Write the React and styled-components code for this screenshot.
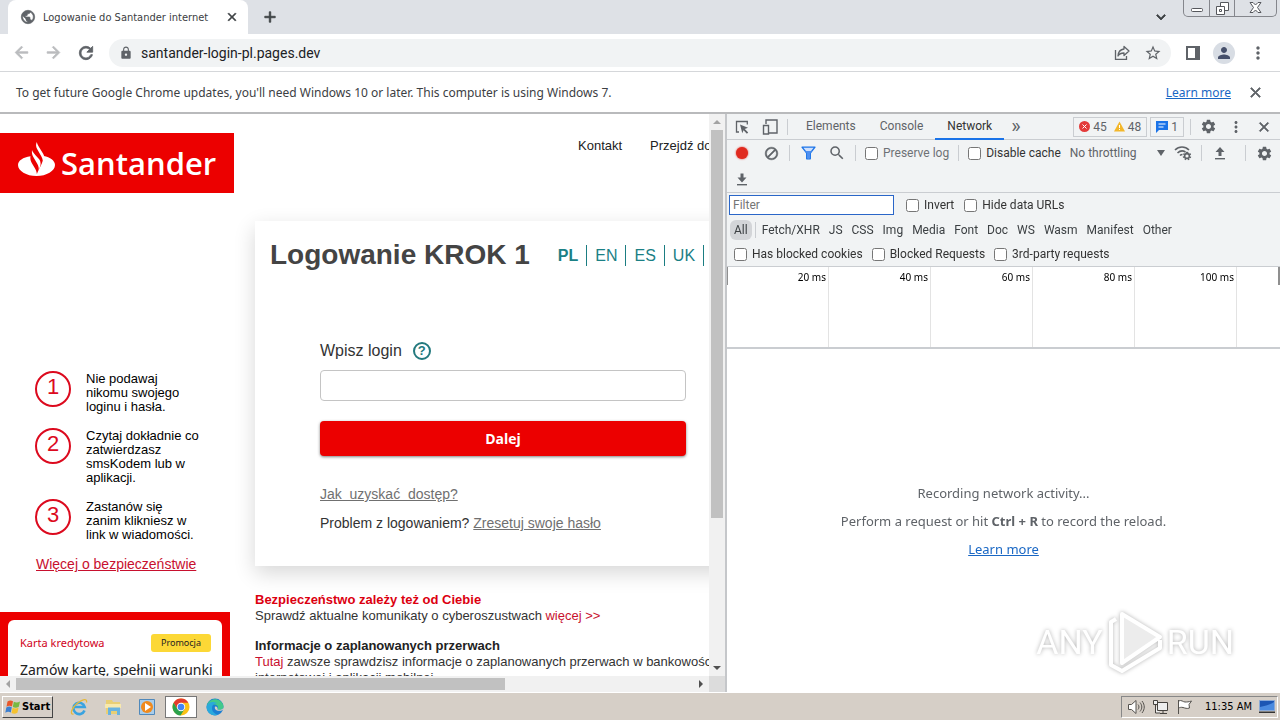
import { useState } from 'react';
import styled, { createGlobalStyle } from 'styled-components';
import {
	MdArrowBack,
	MdArrowForward,
	MdRefresh,
	MdLock,
	MdStarOutline,
	MdClose,
	MdAdd,
	MdMoreVert,
	MdPerson,
	MdPublic,
	MdSettings,
	MdSearch,
	MdBlock,
	MdKeyboardArrowDown
} from 'react-icons/md';

const steps = [
	{ id: 1, text: 'Nie podawaj nikomu swojego loginu i hasła.' },
	{ id: 2, text: 'Czytaj dokładnie co zatwierdzasz smsKodem lub w aplikacji.' },
	{ id: 3, text: 'Zastanów się zanim klikniesz w link w wiadomości.' }
];

const languages = ['PL', 'EN', 'ES', 'UK'];
const resourceTypes = ['Fetch/XHR', 'JS', 'CSS', 'Img', 'Media', 'Font', 'Doc', 'WS', 'Wasm', 'Manifest', 'Other'];
const ticks = ['20 ms', '40 ms', '60 ms', '80 ms', '100 ms'];

const Check = ({ children, muted }) => (
	<CheckLabel $muted={muted}>
		<input type="checkbox" />
		{children}
	</CheckLabel>
);

const ShareIcon = () => (
	<svg width="16" height="16" viewBox="0 0 16 16" fill="none" stroke="#5f6368" strokeWidth="1.3">
		<path d="M1.5 5v9.3h11V11" />
		<path d="M10 1.5 15 6l-5 4.500V8C7 8 5 9 4 11c.2-4 2.500-6.500 6-7z" strokeLinejoin="round" />
	</svg>
);

const SidePanelIcon = () => (
	<svg width="14" height="14" viewBox="0 0 14 14">
		<path fill="#5f6368" fillRule="evenodd" d="M0 0h14v14H0zM2 2h7v10H2z" />
	</svg>
);

const InspectIcon = () => (
	<svg width="14" height="14" viewBox="0 0 14 14">
		<path fill="none" stroke="#5f6368" strokeWidth="1.300" d="M12.300 4.500V1.500H1.500v10.500H4" />
		<path fill="#5f6368" d="m5 4.500 8 3.200-3.200 1.300 3.400 3.400-1.300 1.300-3.400-3.400-1.200 3z" />
	</svg>
);

const DeviceIcon = () => (
	<svg width="16" height="16" viewBox="0 0 16 16" fill="none" stroke="#5f6368" strokeWidth="1.400">
		<path d="M4 5V1h11v13H7" />
		<path d="M1.500 6.500h5V15h-5z" />
	</svg>
);

const FunnelIcon = () => (
	<svg width="15" height="14" viewBox="0 0 15 14">
		<path fill="#cfe0fc" stroke="#1a73e8" strokeWidth="1.300" strokeLinejoin="round" d="M1 1.200h13L9.300 7v5.800H5.700V7z" />
		<path fill="#4e8ff0" d="M4 5h7L9 7.500V12H6V7.500z" />
	</svg>
);

const ArrowBar = ({ up }) => (
	<svg width="12" height="14" viewBox="0 0 12 14">
		<path fill="#5f6368" d={up ? 'M6 1 1.500 6H4.500v4h3V6h3z' : 'M6 10.500 1.500 5.500h3v-4h3v4h3z'} />
		<path fill="#5f6368" d="M1 12h10v1.400H1z" />
	</svg>
);

const WifiGearIcon = () => (
	<svg width="18" height="16" viewBox="0 0 18 16" fill="none" stroke="#5f6368" strokeWidth="1.600">
		<path d="M1 5C5 1 11 1 15 5" />
		<path d="M3.500 8C6 5.600 9 5.400 11.500 7" />
		<path d="M6 10.500c.800-.800 1.500-1 2.500-1" />
		<circle cx="13" cy="11" r="2.400" />
		<path strokeDasharray="1.400 1.500" strokeWidth="1.400" d="M13 7.400a3.600 3.600 0 1 1-.01 0" />
	</svg>
);

const FlameIcon = () => (
	<svg width="37" height="34" viewBox="0 0 37 34" fill="#fff">
		<path d="M12.500 14.300C5 15.300 0 18.800 0 23c0 6 8.300 11 18.500 11S37 29 37 23c0-4.200-4.800-7.600-11.300-8.900.2 2.200-.2 4-1.500 6.500-1.400 3.600-2.900 6-5.300 11.400-.4-2.600-1-4-2-5.700l-3-5.100c-1.300-2.400-1.900-4.600-1.400-6.900z" />
		<path d="M14 8c-.4 3 .2 5 1.600 7.400l3.500 6c1.500 2.500 1.800 4.300 1.600 6.600l1.300-3c1-2.700.8-5-.6-7.500L17.300 13C15.500 10.700 14.500 9.600 14 8z" />
		<path d="M18.800 0c-1.300 2.500-.8 5.200.6 7.500l4 7c1.500 2.800 1.600 4.700 1.200 7 2.300-3.300 2.400-6.500.7-9.500l-4-6.600C20 3.600 19.300 2 18.800 0z" />
	</svg>
);

const WindowsFlag = () => (
	<svg width="16" height="16" viewBox="0 0 16 16">
		<path fill="#e8572a" d="M2.500 2.500C4.500 1.200 6 1.200 8 2.300L7 7.500c-2-1.200-3.500-1-5.500.2z" />
		<path fill="#78b943" d="M8.800 2.700c2 1.100 4 1 6.200-.2l-1.200 5.200c-2 1.200-4 1.200-6 .2z" />
		<path fill="#3c7fd0" d="M1.300 8.500c2-1.200 3.500-1.300 5.500-.2l-1 5.200c-2-1.200-3.500-1-5.500.2z" />
		<path fill="#f5c22f" d="M7.600 8.700c2 1.100 4 1 6-.2l-1.200 5.200c-2 1.200-4 1.200-5.900.2z" />
	</svg>
);

const IeIcon = () => (
	<svg width="18" height="18" viewBox="0 0 18 18" fill="none">
		<path stroke="#39a3e0" strokeWidth="2.600" d="M14.500 12.500A5.700 5.700 0 1 1 14.700 9H5" />
		<path stroke="#e5b93a" strokeWidth="1.300" d="M3.500 16C-.5 17 1.500 10 7 5.500S17.500 0 16.500 4.500" />
	</svg>
);

const FolderIcon = () => (
	<svg width="18" height="18" viewBox="0 0 18 18">
		<path fill="#e9cf74" d="M2 2h6l1 2h7v12H2z" />
		<path fill="#f8e9ac" d="M1 6h16v4H1z" />
		<path fill="#69b3e0" d="M4 9.500h12V17h-3v-4H7v4H4z" />
	</svg>
);

const PlayerIcon = () => (
	<svg width="18" height="18" viewBox="0 0 18 18">
		<path fill="#a9cdea" stroke="#5089bb" d="M1.500 1.500h15v15h-15z" />
		<circle cx="9" cy="9" r="6" fill="#f08a1d" />
		<path fill="#fff" d="m7 5 6 4-6 4z" />
	</svg>
);

const ChromeIcon = () => (
	<svg width="18" height="18" viewBox="0 0 18 18">
		<circle cx="9" cy="9" r="8.500" fill="#fbc116" />
		<path fill="#e33b2e" d="M1.600 4.800A8.500 8.500 0 0 1 16.400 4.800H9L5.400 11z" />
		<path fill="#2ba24c" d="M1.600 4.800A8.500 8.500 0 0 0 8.500 17.500L12.600 11H5.400z" />
		<circle cx="9" cy="9" r="4.200" fill="#fff" />
		<circle cx="9" cy="9" r="3.300" fill="#4285f4" />
	</svg>
);

const EdgeIcon = () => (
	<svg width="18" height="18" viewBox="0 0 18 18">
		<circle cx="9" cy="9" r="8.500" fill="#1b7fd3" />
		<path fill="#42c98b" d="M1 7.500C3-1 15.500-1 17.500 8c.3 3-3 4.500-6 3.500 1.500-3-.5-5-3.500-5-3 0-5.500.5-7 1z" />
		<path fill="#2aa9dc" d="M.7 8.500C2 3.500 8 3 11 5.500 8 5 6 7 6 10c0 4 3 6 6 6.800C6 19 0 14 .7 8.500z" />
		<path fill="#d6cfc7" d="M9 8.500c-1 3 2 5.500 7.500 3.800L18 9.500c-2 2.500-4.500 2.500-6.500 2 .5-2-.5-3.500-2.500-3z" />
	</svg>
);

const TrayIcons = () => (
	<>
		<svg width="18" height="16" viewBox="0 0 18 16" fill="#fff" stroke="#55524e">
			<path d="M1.500 5.500h3L9 1.500v13l-4.500-4h-3z" />
			<path fill="none" d="M11 5.500c1.300 1.500 1.300 3.500 0 5M13 3.500c2.400 3 2.400 6 0 9M15 2c3 4 3 8 0 12" />
		</svg>
		<svg width="17" height="16" viewBox="0 0 17 16" fill="#eee" stroke="#45423e">
			<path d="M5.500 3.500h10v8h-10zM8 14.500h7M11 12v2M1.500 1.500h4v4h-4zM3.500 5.500v8.500H8" />
		</svg>
		<svg width="17" height="16" viewBox="0 0 17 16" fill="#fff" stroke="#55524e">
			<path d="M2.500 15V1M2.500 2c3-1.500 4.500 1 6.500 1s3.500 0 6.500-1L13 5.500l.5 3.500C11 10 9 9 7 8.500s-3 0-4.500.5" />
		</svg>
	</>
);

const BrowserChrome = () => (
	<>
		<TabStrip>
			<Tab>
				<MdPublic size={16} color="#5f6368" strokeWidth={1} />
				<TabTitle>Logowanie do Santander internet</TabTitle>
				<IconButton aria-label="Close tab" $dark><MdClose size={14} strokeWidth={1} /></IconButton>
			</Tab>
			<NewTab aria-label="New tab"><MdAdd size={18} strokeWidth={1} /></NewTab>
			<StripMenu aria-label="Search tabs"><MdKeyboardArrowDown size={18} strokeWidth={1} /></StripMenu>
			<WindowControls>
				<WindowButton aria-label="Minimize">
					<svg width="12" height="12" viewBox="0 0 12 12" fill="#fff" stroke="#55575c"><rect x=".5" y="6.500" width="11" height="3" rx="1" /></svg>
				</WindowButton>
				<WindowButton aria-label="Restore">
					<svg width="13" height="13" viewBox="0 0 13 13" fill="#fff" stroke="#55575c">
						<path fillRule="evenodd" d="M4.500.5h8v8h-8z" />
						<path d="M.5 4.500h8v8h-8zM3.500 7.500h2v2h-2z" />
					</svg>
				</WindowButton>
				<WindowButton $wide aria-label="Close">
					<svg width="13" height="12" viewBox="0 0 13 12" fill="#fff" stroke="#55575c">
						<path d="M1 .5h3L6.500 3 9 .5h3L8.500 5.500 12 10.500H9L6.500 8 4 10.500H1L4.500 5.500z" />
					</svg>
				</WindowButton>
			</WindowControls>
		</TabStrip>
		<Toolbar>
			<IconButton aria-label="Back" $faded><MdArrowBack size={19} strokeWidth={1} /></IconButton>
			<IconButton aria-label="Forward" $faded><MdArrowForward size={19} strokeWidth={1} /></IconButton>
			<IconButton aria-label="Reload"><MdRefresh size={20} strokeWidth={1} /></IconButton>
			<AddressBar>
				<MdLock size={14} color="#5f6368" />
				<Address type="text" aria-label="Address" defaultValue="santander-login-pl.pages.dev" />
				<IconButton aria-label="Share"><ShareIcon /></IconButton>
				<IconButton aria-label="Bookmark"><MdStarOutline size={18} /></IconButton>
			</AddressBar>
			<IconButton aria-label="Side panel"><SidePanelIcon /></IconButton>
			<Avatar aria-label="Profile"><MdPerson size={18} /></Avatar>
			<IconButton aria-label="Menu"><MdMoreVert size={20} /></IconButton>
		</Toolbar>
		<InfoBar>
			<InfoText>
				To get future Google Chrome updates, you'll need Windows 10 or later. This computer is using Windows 7.
			</InfoText>
			<BlueLink href="#">Learn more</BlueLink>
			<IconButton aria-label="Dismiss"><MdClose size={17} strokeWidth={1} /></IconButton>
		</InfoBar>
	</>
);

const LoginPage = () => {
	const [login, setLogin] = useState('');

	return (
		<Page>
			<Sidebar>
				<Logo><FlameIcon /><span>Santander</span></Logo>
				<Steps>
					{steps.map(step => (
						<Step key={step.id}>
							<StepNumber>{step.id}</StepNumber>
							<StepText>{step.text}</StepText>
						</Step>
					))}
				</Steps>
				<SafetyLink href="#">Więcej o bezpieczeństwie</SafetyLink>
				<Promo>
					<PromoCard>
						<PromoTop>Karta kredytowa <Badge>Promocja</Badge></PromoTop>
						<PromoTitle>Zamów kartę, spełnij warunki</PromoTitle>
					</PromoCard>
				</Promo>
			</Sidebar>
			<Main>
				<TopNav>
					<a href="#">Kontakt</a>
					<a href="#">Przejdź do</a>
				</TopNav>
				<LoginCard>
					<CardHead>
						<h1>Logowanie KROK 1</h1>
						<Languages>
							{languages.map((lang, i) => <Lang key={lang} href="#" $active={i === 0}>{lang}</Lang>)}
						</Languages>
					</CardHead>
					<LoginForm onSubmit={e => e.preventDefault()}>
						<LabelRow>
							<label htmlFor="login">Wpisz login</label>
							<Help type="button">?</Help>
						</LabelRow>
						<LoginInput id="login" type="text" value={login} onChange={e => setLogin(e.target.value)} />
						<Submit type="button">Dalej</Submit>
						<GreyLink href="#">Jak&nbsp; uzyskać&nbsp; dostęp?</GreyLink>
						<p>Problem z logowaniem? <GreyLink href="#">Zresetuj swoje hasło</GreyLink></p>
					</LoginForm>
				</LoginCard>
				<Notice>
					<NoticeTitle $red>Bezpieczeństwo zależy też od Ciebie</NoticeTitle>
					<p>Sprawdź aktualne komunikaty o cyberoszustwach <a href="#">więcej &gt;&gt;</a></p>
				</Notice>
				<Notice>
					<NoticeTitle>Informacje o zaplanowanych przerwach</NoticeTitle>
					<p><a href="#">Tutaj</a> zawsze sprawdzisz informacje o zaplanowanych przerwach w bankowości internetowej i aplikacji mobilnej.</p>
				</Notice>
			</Main>
		</Page>
	);
};

const DevTools = () => (
	<Panel>
		<PanelTabs>
			<ToolButton aria-label="Inspect"><InspectIcon /></ToolButton>
			<ToolButton aria-label="Device"><DeviceIcon /></ToolButton>
			<Divider />
			<Tabs>
				<PanelTab>Elements</PanelTab>
				<PanelTab>Console</PanelTab>
				<PanelTab $active>Network</PanelTab>
				<PanelTab $more>»</PanelTab>
			</Tabs>
			<Counters>
				<Counter>
					<svg width="11" height="11" viewBox="0 0 11 11"><circle cx="5.500" cy="5.500" r="5.500" fill="#e33b3b" /><path stroke="#fff" d="m3.500 3.500 4 4m0-4-4 4" /></svg>
					45
					<CounterGap />
					<svg width="11" height="11" viewBox="0 0 11 11"><path fill="#f3b72b" d="M5.500.5 11 10.500H0z" /><path stroke="#fff" d="M5.500 4v3m0 1v1" /></svg>
					48
				</Counter>
				<Counter>
					<svg width="12" height="12" viewBox="0 0 12 12"><path fill="#1a73e8" d="M0 0h12v9H3l-3 3z" /><path stroke="#fff" d="M2.500 3h7m-7 3h5" /></svg>
					1
				</Counter>
			</Counters>
			<Divider />
			<ToolButton aria-label="Settings"><MdSettings size={17} /></ToolButton>
			<ToolButton aria-label="More"><MdMoreVert size={18} /></ToolButton>
			<ToolButton aria-label="Close panel"><MdClose size={16} strokeWidth={1} /></ToolButton>
		</PanelTabs>
		<NetworkBar>
			<BarRow>
				<ToolButton aria-label="Record"><RecordDot /></ToolButton>
				<ToolButton aria-label="Clear"><MdBlock size={15} strokeWidth={1} /></ToolButton>
				<Divider />
				<ToolButton aria-label="Filter"><FunnelIcon /></ToolButton>
				<ToolButton aria-label="Search"><MdSearch size={18} /></ToolButton>
				<Divider />
				<Check muted>Preserve log</Check>
				<Divider />
				<Check>Disable cache</Check>
				<Throttle>
					<select aria-label="Throttling"><option>No throttling</option></select>
				</Throttle>
				<ToolButton aria-label="Network conditions"><WifiGearIcon /></ToolButton>
				<Divider />
				<ToolButton aria-label="Import"><ArrowBar up /></ToolButton>
				<PushRight />
				<Divider />
				<ToolButton aria-label="Network settings"><MdSettings size={17} /></ToolButton>
			</BarRow>
			<BarRow>
				<ToolButton aria-label="Export"><ArrowBar /></ToolButton>
			</BarRow>
		</NetworkBar>
		<Filters>
			<FilterRow>
				<FilterInput type="text" placeholder="Filter" aria-label="Filter" autoFocus />
				<Check>Invert</Check>
				<Check>Hide data URLs</Check>
			</FilterRow>
			<TypeRow>
				<TypeButton $active>All</TypeButton>
				<Divider />
				{resourceTypes.map(type => <TypeButton key={type}>{type}</TypeButton>)}
			</TypeRow>
			<FilterRow $wide>
				<Check>Has blocked cookies</Check>
				<Check>Blocked Requests</Check>
				<Check>3rd-party requests</Check>
			</FilterRow>
		</Filters>
		<Timeline>
			{ticks.map(tick => <Tick key={tick}>{tick}</Tick>)}
		</Timeline>
		<Recording>
			<span>Recording network activity...</span>
			<span>Perform a request or hit <b>Ctrl + R</b> to record the reload.</span>
			<BlueLink href="#">Learn more</BlueLink>
		</Recording>
		<Watermark>
			<span>ANY</span>
			<svg width="56" height="64" viewBox="0 0 56 64" fill="none" stroke="#fff" strokeWidth="4" strokeLinejoin="round">
				<path fill="#ececec" d="M15 53V4l38 23z" />
				<path d="M9 9 4 12v43l11 6 38-23v-8" />
			</svg>
			<span>RUN</span>
		</Watermark>
	</Panel>
);

const App = () => (
	<Screen>
		<GlobalStyle />
		<BrowserChrome />
		<Workspace>
			<Viewport>
				<LoginPage />
				<ScrollTrack $vertical>
					<Arrow $dir="up" />
					<Thumb $vertical />
					<Arrow $dir="down" />
				</ScrollTrack>
				<ScrollTrack>
					<Arrow $dir="left" />
					<Thumb />
					<Arrow $dir="right" />
				</ScrollTrack>
				<Corner />
			</Viewport>
			<DevTools />
		</Workspace>
		<Taskbar>
			<Start><WindowsFlag />Start</Start>
			<TaskButton aria-label="Internet Explorer"><IeIcon /></TaskButton>
			<TaskButton aria-label="Explorer"><FolderIcon /></TaskButton>
			<TaskButton aria-label="Media Player"><PlayerIcon /></TaskButton>
			<TaskButton aria-label="Chrome" $active><ChromeIcon /></TaskButton>
			<TaskButton aria-label="Edge"><EdgeIcon /></TaskButton>
			<Tray>
				<TrayIcons />
				<time>11:35 AM</time>
				<svg width="16" height="14" viewBox="0 0 16 14">
					<path fill="#1c56b4" stroke="#8aa9d6" d="M.5.5h15v10H.5z" />
					<path fill="#4b8be0" d="M1 7c5-1 10-2 14-5v8H1z" />
					<path fill="#333" d="M0 11.500h16V13H0z" />
				</svg>
			</Tray>
		</Taskbar>
	</Screen>
);

const tahoma = '"DejaVu Sans Condensed", "Noto Sans", sans-serif';
const arial = '"Liberation Sans", Arial, sans-serif';
const segoe = '"Noto Sans", "Open Sans", sans-serif';

const GlobalStyle = createGlobalStyle`
	* {
		box-sizing: border-box;
	}
	body {
		margin: 0;
		background: #fff;
	}
	button, input, select {
		font: inherit;
		color: inherit;
	}
	/* md icons carry an empty bounding path */
	svg[stroke-width="1"] path[fill="none"] {
		stroke: none;
	}
	p, h1, h2, ol {
		margin: 0;
		padding: 0;
	}
`;

const Screen = styled.div`
	display: flex;
	flex-direction: column;
	height: 100vh;
	overflow: hidden;
	font-family: ${tahoma};
	color: #3c4043;
`;

const IconButton = styled.button`
	display: flex;
	align-items: center;
	justify-content: center;
	flex: none;
	padding: 0;
	border: none;
	background: none;
	color: ${props => props.$faded ? '#babcbe' : props.$dark ? '#3c4043' : '#5f6368'};
`;

const ToolButton = styled(IconButton)`
	width: 22px;
	height: 22px;
`;

const BlueLink = styled.a`
	color: #1967c4;
`;

const TabStrip = styled.div`
	display: flex;
	align-items: flex-start;
	flex: none;
	height: 34px;
	padding-left: 8px;
	background: #dee1e6;
`;

const Tab = styled.div`
	display: flex;
	align-items: center;
	gap: 7px;
	width: 240px;
	height: 34px;
	padding: 0 9px 0 12px;
	border-radius: 8px 8px 0 0;
	background: #fff;
	font-size: 11px;
`;

const TabTitle = styled.span`
	flex: 1;
	white-space: nowrap;
`;

const NewTab = styled(IconButton)`
	width: 28px;
	height: 34px;
	margin: 0 auto 0 8px;
	color: #3c4043;
`;

const StripMenu = styled(NewTab)`
	margin: 0 8px 0 0;
`;

const WindowControls = styled.div`
	display: flex;
	height: 17px;
	margin-right: 3px;
	border: 1px solid #84868c;
	border-top: none;
	border-radius: 0 0 5px 5px;
`;

const WindowButton = styled(IconButton)`
	width: ${props => props.$wide ? '42px' : '25px'};
	& + & {
		border-left: 1px solid #84868c;
	}
`;

const Toolbar = styled.div`
	display: flex;
	align-items: center;
	flex: none;
	gap: 13px;
	height: 38px;
	padding: 0 12px;
	border-bottom: 1px solid #d5d7da;
	background: #fff;
`;

const AddressBar = styled.div`
	display: flex;
	align-items: center;
	flex: 1;
	gap: 14px;
	height: 28px;
	margin-right: 2px;
	padding: 0 9px 0 10px;
	border-radius: 14px;
	background: #f1f3f4;
	font: 14px Roboto, sans-serif;
`;

const Address = styled.input`
	flex: 1;
	min-width: 0;
	margin-left: -6px;
	padding: 0;
	border: none;
	background: none;
	color: #202124;
`;

const Avatar = styled(IconButton)`
	width: 22px;
	height: 22px;
	border-radius: 50%;
	background: #d8dde4;
	color: #46506b;
`;

const InfoBar = styled.div`
	display: flex;
	align-items: center;
	flex: none;
	gap: 16px;
	height: 42px;
	padding: 0 16px;
	border-bottom: 2px solid #b9babc;
	background: #fff;
	font: 12px ${segoe};
`;

const InfoText = styled.span`
	flex: 1;
`;

const Workspace = styled.div`
	display: flex;
	flex: 1;
	min-height: 0;
`;

const Viewport = styled.div`
	display: grid;
	flex: 1;
	min-width: 0;
	grid-template: minmax(0, 1fr) 16px / minmax(0, 1fr) 16px;
`;

const Page = styled.div`
	display: flex;
	min-height: 0;
	padding-top: 19px;
	overflow: hidden;
	background: #fff;
	font-family: ${arial};
	color: #333;
`;

const ScrollTrack = styled.div`
	display: flex;
	flex-direction: ${props => props.$vertical ? 'column' : 'row'};
	align-items: center;
	background: #f1f1f1;
`;

const Thumb = styled.div`
	${props => props.$vertical ? 'width: 12px; height: 69%; margin-bottom: auto;' : 'height: 12px; width: 69%; margin-right: auto;'}
	background: #c1c1c1;
`;

const turns = { up: 0, right: 90, down: 180, left: 270 };

const Arrow = styled.span`
	width: 16px;
	height: 16px;
	flex: none;
	&::before {
		content: '';
		display: block;
		margin: 6px 4px;
		border: 4px solid transparent;
		border-top: none;
		border-bottom-color: ${props => props.$dir === 'up' || props.$dir === 'left' ? '#a3a3a3' : '#505050'};
		transform: rotate(${props => turns[props.$dir]}deg);
	}
`;

const Corner = styled.div`
	background: #dcdcdc;
`;

const Sidebar = styled.aside`
	display: flex;
	flex-direction: column;
	flex: 0 0 255px;
	align-items: flex-start;
`;

const Logo = styled.div`
	display: flex;
	align-items: center;
	flex: none;
	gap: 6px;
	width: 234px;
	height: 60px;
	margin-bottom: 178px;
	padding-left: 18px;
	background: #ec0000;
	color: #fff;
	font: 600 31px/60px "Open Sans", "Noto Sans", sans-serif;
	svg {
		margin-bottom: 8px;
	}
`;

const Steps = styled.ol`
	display: flex;
	flex-direction: column;
	gap: 14px;
	width: 200px;
	padding-left: 35px;
	list-style: none;
`;

const Step = styled.li`
	display: flex;
	gap: 15px;
	color: #000;
	font-size: 13px;
	line-height: 14px;
`;

const StepText = styled.span`
	padding-top: 1px;
`;

const StepNumber = styled.span`
	flex: none;
	width: 36px;
	height: 36px;
	border: 2px solid #dc0a1e;
	border-radius: 50%;
	color: #dc0a1e;
	font-size: 22px;
	line-height: 28px;
	text-align: center;
`;

const SafetyLink = styled.a`
	margin: 13px 0 39px 36px;
	color: #c8102e;
	font-size: 14px;
	line-height: 18px;
`;

const Promo = styled.div`
	flex: none;
	width: 230px;
	height: 100px;
	padding: 8px;
	background: #ec0000;
	font-family: ${segoe};
`;

const PromoCard = styled.div`
	height: 100px;
	padding: 14px 11px 0 12px;
	border-radius: 6px;
	background: #fff;
`;

const PromoTop = styled.div`
	display: flex;
	align-items: center;
	justify-content: space-between;
	color: #d0021b;
	font-size: 11px;
	line-height: 18px;
`;

const Badge = styled.span`
	padding: 0 10px;
	border-radius: 3px;
	background: #fcd836;
	color: #222;
	font-size: 9px;
`;

const PromoTitle = styled.div`
	margin-top: 7px;
	color: #222;
	font-size: 14px;
	line-height: 22px;
	white-space: nowrap;
`;

const Main = styled.main`
	flex: 0 0 510px;
`;

const TopNav = styled.nav`
	display: flex;
	gap: 28px;
	height: 88px;
	padding: 5px 0 0 323px;
	font-size: 13px;
	white-space: nowrap;
	a {
		color: #222;
		text-decoration: none;
	}
`;

const LoginCard = styled.section`
	height: 345px;
	margin-bottom: 26px;
	padding: 16px 0 0 15px;
	background: #fff;
	box-shadow: 0 7px 20px rgba(0, 0, 0, .16);
`;

const CardHead = styled.div`
	display: flex;
	align-items: center;
	gap: 28px;
	h1 {
		color: #444;
		font-size: 28px;
		line-height: 36px;
		white-space: nowrap;
	}
`;

const Languages = styled.nav`
	display: flex;
`;

const Lang = styled.a`
	padding: 0 8px;
	border-right: 1px solid #1b7d82;
	color: #1b8085;
	font-size: 16px;
	font-weight: ${props => props.$active ? 'bold' : 'normal'};
	line-height: 21px;
	text-decoration: none;
	&:first-child {
		padding-left: 0;
	}
`;

const LoginForm = styled.form`
	width: 416px;
	padding: 68px 0 0 50px;
	font-size: 14px;
`;

const LabelRow = styled.div`
	display: flex;
	align-items: center;
	gap: 11px;
	margin-bottom: 9px;
	font-size: 16px;
	line-height: 20px;
`;

const Help = styled.button`
	width: 18px;
	height: 18px;
	padding: 0;
	border: 2px solid #23797e;
	border-radius: 50%;
	background: none;
	color: #23797e;
	font-size: 13px;
	font-weight: bold;
	line-height: 14px;
`;

const LoginInput = styled.input`
	display: block;
	width: 100%;
	height: 31px;
	padding: 0 8px;
	border: 1px solid #c4c4c4;
	border-radius: 4px;
`;

const Submit = styled.button`
	display: block;
	width: 100%;
	height: 35px;
	margin: 20px 0 30px;
	border: none;
	border-radius: 4px;
	background: #ec0000;
	box-shadow: 0 1px 3px rgba(0, 0, 0, .5);
	color: #fff;
	font: bold 14px "Open Sans", "Noto Sans", sans-serif;
`;

const GreyLink = styled.a`
	color: #707070;
	& + p {
		margin-top: 13px;
	}
`;

const Notice = styled.section`
	margin-bottom: 14px;
	font-size: 13px;
	line-height: 16px;
	a {
		color: #c8102e;
		text-decoration: none;
	}
`;

const NoticeTitle = styled.h2`
	color: ${props => props.$red ? '#dc0010' : '#222'};
	font-size: 13px;
`;

const Panel = styled.aside`
	position: relative;
	display: flex;
	flex-direction: column;
	flex: 0 0 555px;
	border-left: 2px solid #c5c7ca;
	background: #fff;
	font: 12px Roboto, ${segoe};
`;

const Divider = styled.i`
	flex: none;
	width: 1px;
	height: 16px;
	background: #cacdd1;
`;

const PanelTabs = styled.div`
	display: flex;
	align-items: center;
	flex: none;
	gap: 6px;
	height: 26px;
	padding: 0 5px 0 4px;
	border-bottom: 1px solid #cacdd1;
	background: #f1f3f4;
`;

const Tabs = styled.div`
	display: flex;
	flex: 1;
	align-self: stretch;
`;

const PanelTab = styled.button`
	height: 26px;
	padding: 0 ${props => props.$more ? '7px' : '12px'};
	border: none;
	border-bottom: 2px solid ${props => props.$active ? '#1a73e8' : 'transparent'};
	background: none;
	color: ${props => props.$active ? '#333' : '#5f6368'};
	font-size: ${props => props.$more ? '20px' : '12px'};
	line-height: 22px;
`;

const Counters = styled.div`
	display: flex;
	gap: 3px;
`;

const Counter = styled.button`
	display: flex;
	align-items: center;
	gap: 3px;
	height: 20px;
	padding: 0 5px;
	border: 1px solid #cacdd1;
	background: none;
	color: #5f6368;
`;

const CounterGap = styled.i`
	width: 1px;
`;

const NetworkBar = styled.div`
	flex: none;
	border-bottom: 1px solid #cacdd1;
	background: #f1f3f4;
`;

const BarRow = styled.div`
	display: flex;
	align-items: center;
	gap: 7px;
	height: 26px;
	padding: 0 5px 0 4px;
`;

const PushRight = styled.i`
	flex: 1;
`;

const RecordDot = styled.i`
	width: 12px;
	height: 12px;
	border-radius: 50%;
	background: #e02a1f;
	box-shadow: 0 0 2px #e02a1f;
`;

const CheckLabel = styled.label`
	display: flex;
	align-items: center;
	gap: 5px;
	flex: none;
	margin: 0 2px;
	color: ${props => props.$muted ? '#6e7175' : '#333'};
	input {
		width: 13px;
		height: 13px;
		margin: 0;
	}
`;

const Throttle = styled.div`
	display: flex;
	align-items: center;
	width: 99px;
	color: #5f6368;
	select {
		flex: 1;
		min-width: 0;
		padding: 0;
		border: none;
		background: none;
		appearance: none;
	}
	&::after {
		content: '';
		border: 4px solid transparent;
		border-top: 6px solid #5f6368;
		border-bottom: none;
	}
`;

const Filters = styled.div`
	flex: none;
	border-bottom: 1px solid #cacdd1;
	background: #f1f3f4;
`;

const FilterRow = styled.div`
	display: flex;
	align-items: center;
	gap: ${props => props.$wide ? '5px' : '6px'};
	height: 24px;
	padding-left: ${props => props.$wide ? '5px' : '2px'};
`;

const FilterInput = styled.input`
	width: 165px;
	height: 20px;
	margin-right: 4px;
	padding: 0 3px;
	border: 1px solid #2a66c8;
	outline: none;
	background: #fff;
`;

const TypeRow = styled.div`
	display: flex;
	align-items: center;
	height: 25px;
	padding-left: 3px;
	${Divider} {
		margin: 0 2px;
	}
`;

const TypeButton = styled.button`
	height: 20px;
	padding: 0 4px;
	margin-right: 1px;
	border: none;
	border-radius: 6px;
	background: ${props => props.$active ? '#d3d5d8' : 'none'};
	line-height: 20px;
`;

const Timeline = styled.div`
	display: flex;
	flex: none;
	height: 82px;
	border-bottom: 2px solid #cacdd1;
	background:
		linear-gradient(#8f8f8f, #8f8f8f) left top / 1px 18px no-repeat,
		linear-gradient(#8f8f8f, #8f8f8f) right top / 2px 18px no-repeat;
`;

const Tick = styled.div`
	width: 102px;
	padding: 2px 2px 0 0;
	border-right: 1px solid #e3e3e3;
	color: #000;
	font: 10px/16px ${segoe};
	text-align: right;
`;

const Recording = styled.div`
	display: flex;
	flex-direction: column;
	align-items: center;
	justify-content: center;
	flex: 1;
	gap: 8px;
	color: #5f6368;
	font: 13px/20px ${segoe};
`;

const Watermark = styled.div`
	position: absolute;
	right: 46px;
	bottom: 18px;
	display: flex;
	align-items: center;
	gap: 4px;
	color: #fff;
	font: 34px Roboto, sans-serif;
	filter: drop-shadow(0 0 2px rgba(0, 0, 0, .3));
	pointer-events: none;
`;

const Taskbar = styled.footer`
	display: flex;
	align-items: center;
	flex: none;
	height: 28px;
	padding: 0 2px;
	border-top: 1px solid #fff;
	background: #d6cfc7;
	color: #000;
`;

const Start = styled.button`
	display: flex;
	align-items: center;
	gap: 1px;
	height: 22px;
	margin-right: 10px;
	padding: 0 2px;
	border: 1px solid #fff;
	border-right-color: #444;
	border-bottom-color: #444;
	background: #d6cfc7;
	font-size: 11px;
	font-weight: bold;
`;

const TaskButton = styled.button`
	display: flex;
	align-items: center;
	justify-content: center;
	width: 32px;
	height: 22px;
	margin-right: 2px;
	padding: 0;
	border: 1px solid ${props => props.$active ? '#777' : 'transparent'};
	background: ${props => props.$active ? '#fff' : 'none'};
`;

const Tray = styled.div`
	display: flex;
	align-items: center;
	gap: 7px;
	height: 22px;
	margin-left: auto;
	padding: 0 2px 0 5px;
	border: 1px solid #fff;
	border-top-color: #888;
	border-left-color: #888;
	font-size: 11px;
	time {
		margin-left: 5px;
	}
`;

export default App;
